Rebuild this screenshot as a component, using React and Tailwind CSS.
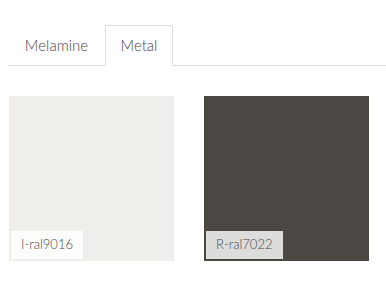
import React, { useState } from 'react';

const tabs = [
  { name: 'Melamine', width: 'w-[97px]' },
  { name: 'Metal', width: 'w-[68px]' },
];

const swatches = [
  { code: 'I-ral9016', color: 'bg-[#efeeea]', label: 'bg-[#fdfdfc]' },
  { code: 'R-ral7022', color: 'bg-[#4b4843]', label: 'bg-[#dcdcdb]' },
];

export default function App() {
  const [tab, setTab] = useState('Metal');

  return (
    <div className="w-[386px] h-[298px] bg-white font-['Lato',sans-serif] font-light text-[#444] overflow-hidden">
      {/* Tabs */}
      <div className="pt-[25px] pl-2">
        <div className="flex border-b border-[#dedede]">
          {tabs.map((t) => (
            <button
              key={t.name}
              onClick={() => setTab(t.name)}
              className={`${t.width} h-[41px] text-[15px] font-light -mb-px ${
                tab === t.name
                  ? 'border border-[#dedede] border-b-white bg-white'
                  : 'border border-transparent'
              }`}
            >
              {t.name}
            </button>
          ))}
        </div>
      </div>

      {/* Swatches */}
      <div className="flex gap-[30px] pl-[9px] pt-[30px]">
        {swatches.map((s) => (
          <div key={s.code} className={`w-[165px] h-[165px] ${s.color} flex items-end p-[2px]`}>
            <div className={`${s.label} h-[28px] px-[10px] flex items-center text-[13px] text-[#444]`}>
              {s.code}
            </div>
          </div>
        ))}
      </div>
    </div>
  );
}
